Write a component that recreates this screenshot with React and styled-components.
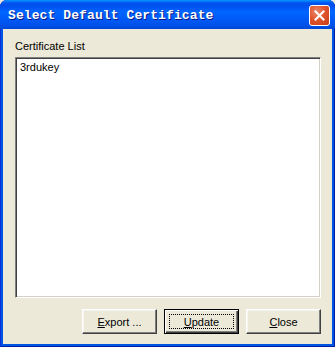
import React from "react";
import styled, { createGlobalStyle } from "styled-components";

const Global = createGlobalStyle`
  html, body { margin: 0; padding: 0; background: #ECE9D8; }
  #root { width: 335px; height: 347px; }
`;

const Window = styled.div`
  width: 335px;
  height: 347px;
  box-sizing: border-box;
  display: flex;
  flex-direction: column;
  background: #0054E3;
  border-radius: 7px 7px 0 0;
  overflow: hidden;
  box-shadow: inset 1px 0 #0831D9, inset -1px 0 #001EA0, inset 0 -1px #001EA0;
`;

const TitleBar = styled.div`
  height: 29px;
  flex: none;
  display: flex;
  align-items: center;
  padding: 0 5px 0 8px;
  background: linear-gradient(
    to bottom,
    #0997FF 0px,
    #0053EE 3px,
    #0050EE 6px,
    #0066FF 12px,
    #0058F5 20px,
    #0050E6 26px,
    #0046D6 29px
  );
`;

const Title = styled.div`
  flex: 1;
  color: #ffffff;
  font-family: "Liberation Mono", "DejaVu Sans Mono", monospace;
  font-weight: bold;
  font-size: 13px;
  letter-spacing: 0.1px;
  text-shadow: 1px 1px #0A1883;
  margin-top: 1px;
`;

const CloseBtn = styled.div`
  width: 21px;
  height: 21px;
  box-sizing: border-box;
  border: 1px solid #ffffff;
  border-radius: 3px;
  background: radial-gradient(circle at 35% 30%, #E9886C 0%, #E0552F 45%, #C73B14 100%);
  display: flex;
  align-items: center;
  justify-content: center;
  margin-top: 2px;
`;

const Body = styled.div`
  flex: 1;
  margin: 0 3px 3px 3px;
  background: #ECE9D8;
  display: flex;
  flex-direction: column;
  padding: 11px 11px 10px 12px;
  box-sizing: border-box;
`;

const Label = styled.div`
  font-family: "Liberation Sans", Arial, sans-serif;
  font-size: 11px;
  line-height: 13px;
  color: #000;
  margin-bottom: 4px;
`;

const ListBox = styled.div`
  height: 241px;
  box-sizing: border-box;
  background: #ffffff;
  border-top: 1px solid #808080;
  border-left: 1px solid #808080;
  border-bottom: 1px solid #ffffff;
  border-right: 1px solid #ffffff;
  box-shadow: inset 1px 1px #404040, inset -1px -1px #D4D0C8;
  padding: 3px 4px;
`;

const ListItem = styled.div`
  font-family: "Liberation Sans", Arial, sans-serif;
  font-size: 11px;
  line-height: 13px;
  color: #000;
`;

const ButtonRow = styled.div`
  display: flex;
  justify-content: flex-end;
  gap: 7px;
  margin-top: 11px;
`;

const Button = styled.div`
  width: 75px;
  height: 25px;
  box-sizing: border-box;
  background: #ECE9D8;
  display: flex;
  align-items: center;
  justify-content: center;
  font-family: "Liberation Sans", Arial, sans-serif;
  font-size: 11px;
  color: #000;
  position: relative;
  border: 1px solid ${(p) => (p.$default ? "#000000" : "#FFFFFF")};
  ${(p) =>
    p.$default
      ? `box-shadow: inset 1px 1px #ffffff, inset -1px -1px #404040, inset -2px -2px #808080;`
      : `border-right-color: #404040; border-bottom-color: #404040; box-shadow: inset -1px -1px #808080, inset 1px 1px #F5F4EE;`}
`;

const Focus = styled.span`
  position: absolute;
  left: 4px;
  top: 4px;
  right: 4px;
  bottom: 4px;
  border: 1px dotted #000;
`;

const U = styled.span`
  text-decoration: underline;
`;

export default function App() {
  return (
    <>
      <Global />
      <Window>
        <TitleBar>
          <Title>Select Default Certificate</Title>
          <CloseBtn>
            <svg width="11" height="11" viewBox="0 0 11 11">
              <path d="M1.5 1.5 L9.5 9.5 M9.5 1.5 L1.5 9.5" stroke="#ffffff" strokeWidth="2" strokeLinecap="square" />
            </svg>
          </CloseBtn>
        </TitleBar>
        <Body>
          <Label>Certificate List</Label>
          <ListBox>
            <ListItem>3rdukey</ListItem>
          </ListBox>
          <ButtonRow>
            <Button>
              <span><U>E</U>xport ...</span>
            </Button>
            <Button $default>
              <Focus />
              <span><U>U</U>pdate</span>
            </Button>
            <Button>
              <span><U>C</U>lose</span>
            </Button>
          </ButtonRow>
        </Body>
      </Window>
    </>
  );
}
